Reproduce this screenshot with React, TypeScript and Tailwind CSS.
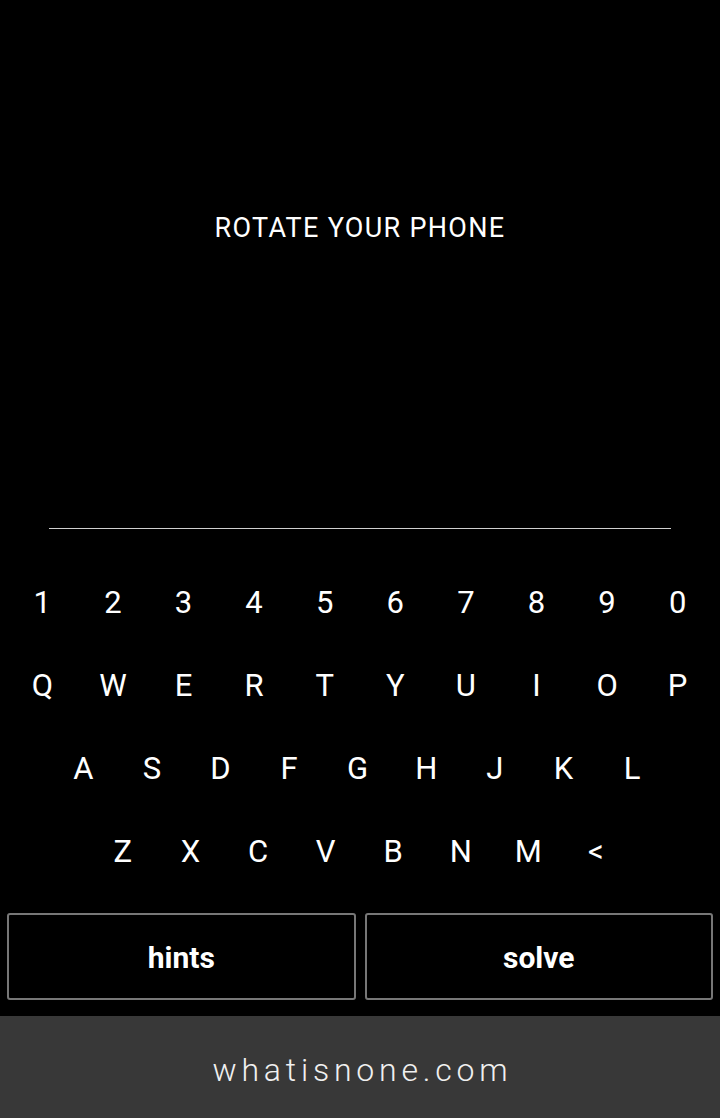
const ROW1 = ['1', '2', '3', '4', '5', '6', '7', '8', '9', '0'];
const ROW2 = ['Q', 'W', 'E', 'R', 'T', 'Y', 'U', 'I', 'O', 'P'];
const ROW3 = ['A', 'S', 'D', 'F', 'G', 'H', 'J', 'K', 'L'];
const ROW4 = ['Z', 'X', 'C', 'V', 'B', 'N', 'M', '<'];

export default function App() {
    return (
        <div className="w-[720px] h-[1118px] bg-black text-white flex flex-col overflow-hidden font-['Roboto',sans-serif]">
            {/* 안내 문구 */}
            <div className="h-[528px] flex flex-col">
                <p className="mt-[213px] text-center text-[27px] leading-[30px] tracking-[1.3px]">ROTATE YOUR PHONE</p>
            </div>
            <div className="mx-[49px] h-px bg-[#d0d0d0]" />

            {/* 키보드 */}
            <div className="mt-[33px] flex flex-col text-[31px]">
                <div className="flex px-[7px] h-[83px] items-center">
                    {ROW1.map((k) => (
                        <button key={k} className="flex-1 text-center">{k}</button>
                    ))}
                </div>
                <div className="flex px-[7px] h-[83px] items-center">
                    {ROW2.map((k) => (
                        <button key={k} className="flex-1 text-center">{k}</button>
                    ))}
                </div>
                <div className="flex pl-[49px] h-[83px] items-center">
                    {ROW3.map((k) => (
                        <button key={k} className="w-[68.6px] text-center">{k}</button>
                    ))}
                </div>
                <div className="flex pl-[89px] h-[83px] items-center">
                    {ROW4.map((k) => (
                        <button key={k} className="w-[67.6px] text-center">{k}</button>
                    ))}
                </div>
            </div>

            {/* 버튼 */}
            <div className="mt-[19px] flex gap-[9px] px-[7px]">
                <button className="flex-1 h-[87px] pt-[2px] border-2 border-[#777] rounded-[3px] text-[30px] font-bold">hints</button>
                <button className="flex-1 h-[87px] pt-[2px] border-2 border-[#777] rounded-[3px] text-[30px] font-bold">solve</button>
            </div>

            <div className="mt-[16px] h-[102px] pt-[6px] pl-[5px] bg-[#383838] flex items-center justify-center">
                <span className="text-[32px] font-light tracking-[4.8px] text-[#f0f0f0]">whatisnone.com</span>
            </div>
        </div>
    );
}
